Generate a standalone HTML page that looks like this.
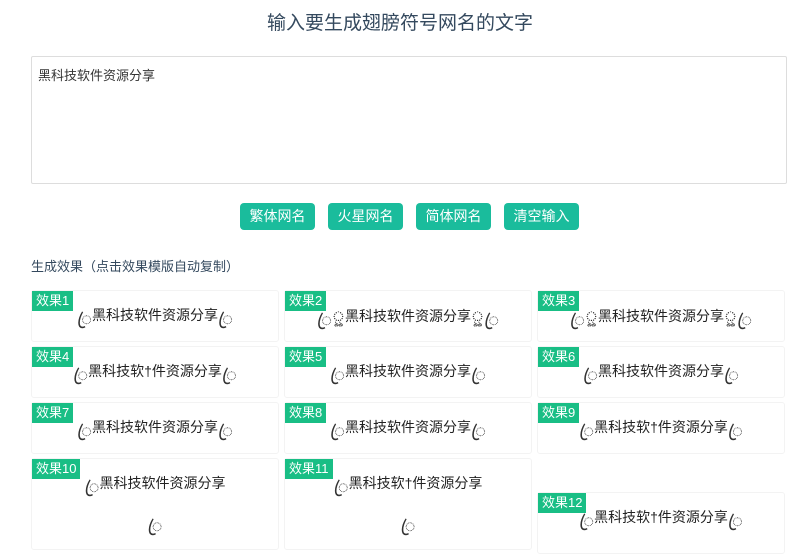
<html><head><meta charset="utf-8"><style>
body{margin:0;width:800px;height:540px;overflow:hidden;background:#fff;font-family:"Liberation Sans","Noto Sans CJK SC",sans-serif;position:relative}
.t{position:absolute;top:8px;left:0;width:800px;text-align:center;font-size:19px;color:#34495e}
.ta{position:absolute;left:31px;top:56px;width:756px;height:128px;border:1px solid #ddd;border-radius:2px;font-size:13px;color:#333;padding:8px 6px;box-sizing:border-box}
.b{position:absolute;top:203px;height:27px;line-height:27px;background:#1abc9c;color:#fff;font-size:14px;border-radius:4px;text-align:center;width:75px}
.s{position:absolute;left:31px;top:256px;font-size:13px;color:#34495e}
.c{position:absolute;width:246px;border:1px solid #f3f3f3;border-radius:3px}
.l{position:absolute;left:0;top:0;background:#19be85;color:#fff;font-size:13px;padding:0 4px;height:20px;line-height:20px}
.x{position:absolute;top:14px;left:0;width:100%;text-align:center;font-size:14px;color:#222;white-space:nowrap}
.d{font-size:18px;color:#333;vertical-align:-5px}
</style></head><body>
<div class="t">输入要生成翅膀符号网名的文字</div>
<div class="ta">黑科技软件资源分享</div>
<div class="b" style="left:240px">繁体网名</div>
<div class="b" style="left:328px">火星网名</div>
<div class="b" style="left:416px">简体网名</div>
<div class="b" style="left:504px">清空输入</div>
<div class="s">生成效果（点击效果模版自动复制）</div>

<div class="c" style="left:31px;top:290px;height:50px"><span class="l">效果1</span><div class="x"><span class="d">ꦿ</span>黑科技软件资源分享<span class="d">ꦿ</span></div></div>
<div class="c" style="left:284px;top:290px;height:50px"><span class="l">效果2</span><div class="x"><span class="d">ꦿ</span>ৣ黑科技软件资源分享ৣ<span class="d">ꦿ</span></div></div>
<div class="c" style="left:537px;top:290px;height:50px"><span class="l">效果3</span><div class="x"><span class="d">ꦿ</span>ৣ黑科技软件资源分享ৣ<span class="d">ꦿ</span></div></div>

<div class="c" style="left:31px;top:346px;height:50px"><span class="l">效果4</span><div class="x"><span class="d">ꦿ</span>黑科技软†件资源分享<span class="d">ꦿ</span></div></div>
<div class="c" style="left:284px;top:346px;height:50px"><span class="l">效果5</span><div class="x"><span class="d">ꦿ</span>黑科技软件资源分享<span class="d">ꦿ</span></div></div>
<div class="c" style="left:537px;top:346px;height:50px"><span class="l">效果6</span><div class="x"><span class="d">ꦿ</span>黑科技软件资源分享<span class="d">ꦿ</span></div></div>

<div class="c" style="left:31px;top:402px;height:50px"><span class="l">效果7</span><div class="x"><span class="d">ꦿ</span>黑科技软件资源分享<span class="d">ꦿ</span></div></div>
<div class="c" style="left:284px;top:402px;height:50px"><span class="l">效果8</span><div class="x"><span class="d">ꦿ</span>黑科技软件资源分享<span class="d">ꦿ</span></div></div>
<div class="c" style="left:537px;top:402px;height:50px"><span class="l">效果9</span><div class="x"><span class="d">ꦿ</span>黑科技软†件资源分享<span class="d">ꦿ</span></div></div>

<div class="c" style="left:31px;top:458px;height:90px"><span class="l">效果10</span><div class="x"><span class="d">ꦿ</span>黑科技软件资源分享</div><div class="x" style="top:54px"><span class="d">ꦿ</span></div></div>
<div class="c" style="left:284px;top:458px;height:90px"><span class="l">效果11</span><div class="x"><span class="d">ꦿ</span>黑科技软†件资源分享</div><div class="x" style="top:54px"><span class="d">ꦿ</span></div></div>
<div class="c" style="left:537px;top:492px;height:60px"><span class="l">效果12</span><div class="x"><span class="d">ꦿ</span>黑科技软†件资源分享<span class="d">ꦿ</span></div></div>
</body></html>
